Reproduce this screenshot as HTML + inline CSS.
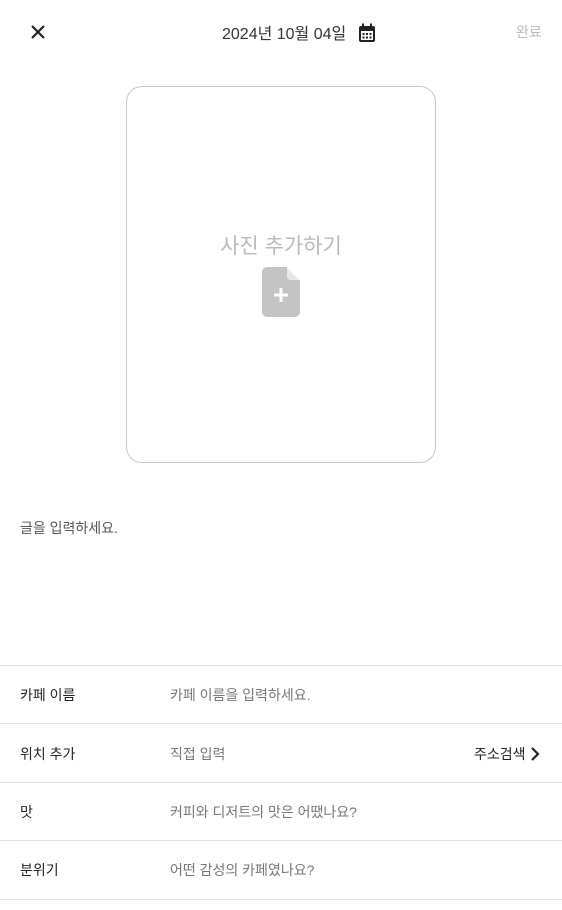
<!DOCTYPE html>
<html><head><meta charset="utf-8"><style>
body{margin:0;width:562px;height:910px;background:#fff;font-family:"Liberation Sans","Noto Sans CJK KR","NanumGothic",sans-serif;position:relative;overflow:hidden;color:#222}
.a{position:absolute}
.line{position:absolute;left:0;width:562px;height:1px;background:#e3e3e3}
.lab{position:absolute;left:20px;font-size:14px;color:#222}
.ph{position:absolute;left:170px;font-size:14px;color:#777}
</style></head><body>
<svg class="a" style="left:30px;top:24px" width="16" height="16" viewBox="0 0 16 16"><path d="M2 2L14 14M14 2L2 14" stroke="#222" stroke-width="2.2"/></svg>
<div class="a" style="left:222px;top:20px;font-size:16px;color:#333">2024년 10월 04일</div>
<svg class="a" style="left:358px;top:23px" width="18" height="20" viewBox="0 0 18 20"><rect x="1" y="3" width="16" height="16" rx="2" fill="#222"/><rect x="4" y="0.5" width="2" height="4" fill="#222"/><rect x="12" y="0.5" width="2" height="4" fill="#222"/><rect x="3" y="8" width="12" height="9" fill="#fff"/><g fill="#222"><rect x="4.5" y="10" width="2" height="2"/><rect x="8" y="10" width="2" height="2"/><rect x="11.5" y="10" width="2" height="2"/><rect x="4.5" y="13.5" width="2" height="2"/><rect x="8" y="13.5" width="2" height="2"/><rect x="11.5" y="13.5" width="2" height="2"/></g></svg>
<div class="a" style="left:516px;top:22px;font-size:14px;color:#bbb">완료</div>
<div class="a" style="left:126px;top:86px;width:308px;height:375px;border:1px solid #c8c8c8;border-radius:16px"></div>
<div class="a" style="left:126px;top:230px;width:310px;text-align:center;font-size:21px;color:#bbb">사진 추가하기</div>
<svg class="a" style="left:262px;top:267px" width="38" height="50" viewBox="0 0 38 50"><path d="M5 0H25L38 13V45A5 5 0 0 1 33 50H5A5 5 0 0 1 0 45V5A5 5 0 0 1 5 0Z" fill="#c4c4c4"/><path d="M25 0V9A4 4 0 0 0 29 13H38Z" fill="#fff"/><path d="M25 1V9A4 4 0 0 0 29 13H37" fill="#e6e6e6"/><path d="M19 21V35M12 28H26" stroke="#fff" stroke-width="3"/></svg>
<div class="a" style="left:20px;top:518px;font-size:14px;color:#555">글을 입력하세요.</div>
<div class="line" style="top:665px"></div>
<div class="lab" style="top:685px">카페 이름</div><div class="ph" style="top:685px">카페 이름을 입력하세요.</div>
<div class="line" style="top:723px"></div>
<div class="lab" style="top:744px">위치 추가</div><div class="ph" style="top:744px">직접 입력</div>
<div class="a" style="left:474px;top:744px;font-size:14px;color:#222">주소검색</div>
<svg class="a" style="left:530px;top:746px" width="10" height="16" viewBox="0 0 10 16"><path d="M2 2L8 8L2 14" stroke="#222" stroke-width="2.2" fill="none"/></svg>
<div class="line" style="top:782px"></div>
<div class="lab" style="top:802px">맛</div><div class="ph" style="top:802px">커피와 디저트의 맛은 어땠나요?</div>
<div class="line" style="top:840px"></div>
<div class="lab" style="top:860px">분위기</div><div class="ph" style="top:860px">어떤 감성의 카페였나요?</div>
<div class="line" style="top:899px"></div>
</body></html>
